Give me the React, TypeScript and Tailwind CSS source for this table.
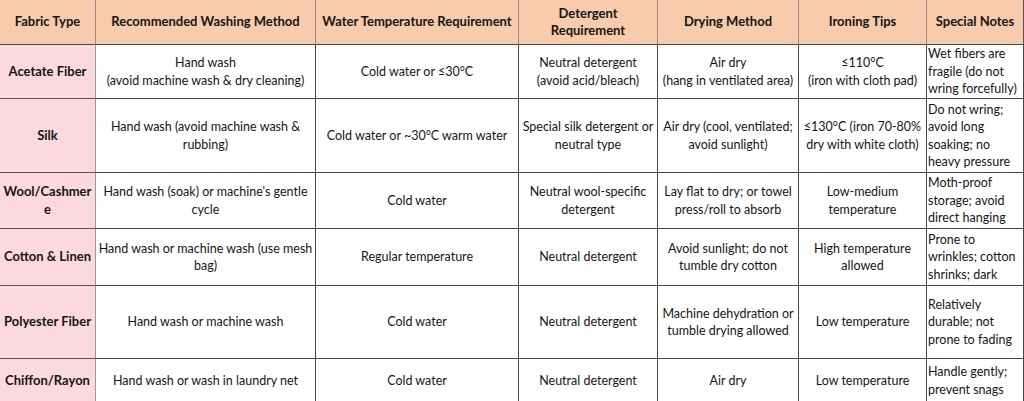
import React from "react"

type Row = {
  fabric: string[]
  cells: string[][]
  notes: string[]
  h: string
}

const headers: string[][] = [
  ["Fabric Type"],
  ["Recommended Washing Method"],
  ["Water Temperature Requirement"],
  ["Detergent", "Requirement"],
  ["Drying Method"],
  ["Ironing Tips"],
  ["Special Notes"],
]

const rows: Row[] = [
  {
    fabric: ["Acetate Fiber"],
    cells: [
      ["Hand wash", "(avoid machine wash & dry cleaning)"],
      ["Cold water or ≤30°C"],
      ["Neutral detergent", "(avoid acid/bleach)"],
      ["Air dry", "(hang in ventilated area)"],
      ["≤110°C", "(iron with cloth pad)"],
    ],
    notes: ["Wet fibers are", "fragile (do not", "wring forcefully)"],
    h: "h-[54px]",
  },
  {
    fabric: ["Silk"],
    cells: [
      ["Hand wash (avoid machine wash &", "rubbing)"],
      ["Cold water or ~30°C warm water"],
      ["Special silk detergent or", "neutral type"],
      ["Air dry (cool, ventilated;", "avoid sunlight)"],
      ["≤130°C (iron 70-80%", "dry with white cloth)"],
    ],
    notes: ["Do not wring;", "avoid long", "soaking; no", "heavy pressure"],
    h: "h-[74px]",
  },
  {
    fabric: ["Wool/Cashmer", "e"],
    cells: [
      ["Hand wash (soak) or machine's gentle", "cycle"],
      ["Cold water"],
      ["Neutral wool-specific", "detergent"],
      ["Lay flat to dry; or towel", "press/roll to absorb"],
      ["Low-medium", "temperature"],
    ],
    notes: ["Moth-proof", "storage; avoid", "direct hanging"],
    h: "h-[56px]",
  },
  {
    fabric: ["Cotton & Linen"],
    cells: [
      ["Hand wash or machine wash (use mesh", "bag)"],
      ["Regular temperature"],
      ["Neutral detergent"],
      ["Avoid sunlight; do not", "tumble dry cotton"],
      ["High temperature", "allowed"],
    ],
    notes: ["Prone to", "wrinkles; cotton", "shrinks; dark"],
    h: "h-[57px]",
  },
  {
    fabric: ["Polyester Fiber"],
    cells: [
      ["Hand wash or machine wash"],
      ["Cold water"],
      ["Neutral detergent"],
      ["Machine dehydration or", "tumble drying allowed"],
      ["Low temperature"],
    ],
    notes: ["Relatively", "durable; not", "prone to fading"],
    h: "h-[73px]",
  },
  {
    fabric: ["Chiffon/Rayon"],
    cells: [
      ["Hand wash or wash in laundry net"],
      ["Cold water"],
      ["Neutral detergent"],
      ["Air dry"],
      ["Low temperature"],
    ],
    notes: ["Handle gently;", "prevent snags"],
    h: "h-[44px]",
  },
]

function Lines({ lines }: { lines: string[] }) {
  return (
    <>
      {lines.map((l, i) => (
        <div key={i} className="whitespace-nowrap">
          {l}
        </div>
      ))}
    </>
  )
}

export default function App() {
  return (
    <div
      className="h-[401px] w-[1024px] overflow-hidden bg-white text-[12.5px] leading-[17.5px] text-[#151515]"
      style={{ fontFamily: "Lato, 'Open Sans', sans-serif" }}
    >
      <div className="grid grid-cols-[96px_220px_203px_139px_141px_128px_97px]">
        {headers.map((h, i) => (
          <div
            key={i}
            className={`flex h-[45px] flex-col items-center justify-center border-b border-b-[#444] bg-[#f8cbad] text-center text-[13px] font-bold ${
              i < 6 ? "border-r border-r-[#9c8a80]" : "border-r border-r-[#555]"
            }`}
          >
            <Lines lines={h} />
          </div>
        ))}

        {rows.map((r, ri) => (
          <React.Fragment key={ri}>
            <div
              className={`${r.h} flex flex-col items-center justify-center border-b border-r border-b-[#555] border-r-[#999] bg-[#fbd9de] text-center text-[13px] font-bold`}
            >
              <Lines lines={r.fabric} />
            </div>
            {r.cells.map((c, ci) => (
              <div
                key={ci}
                className={`${r.h} flex flex-col items-center justify-center border-b border-r border-[#444] text-center`}
              >
                <Lines lines={c} />
              </div>
            ))}
            <div
              className={`${r.h} flex flex-col justify-center border-b border-r border-[#444] pl-[1px] text-left`}
            >
              <Lines lines={r.notes} />
            </div>
          </React.Fragment>
        ))}
      </div>
    </div>
  )
}
